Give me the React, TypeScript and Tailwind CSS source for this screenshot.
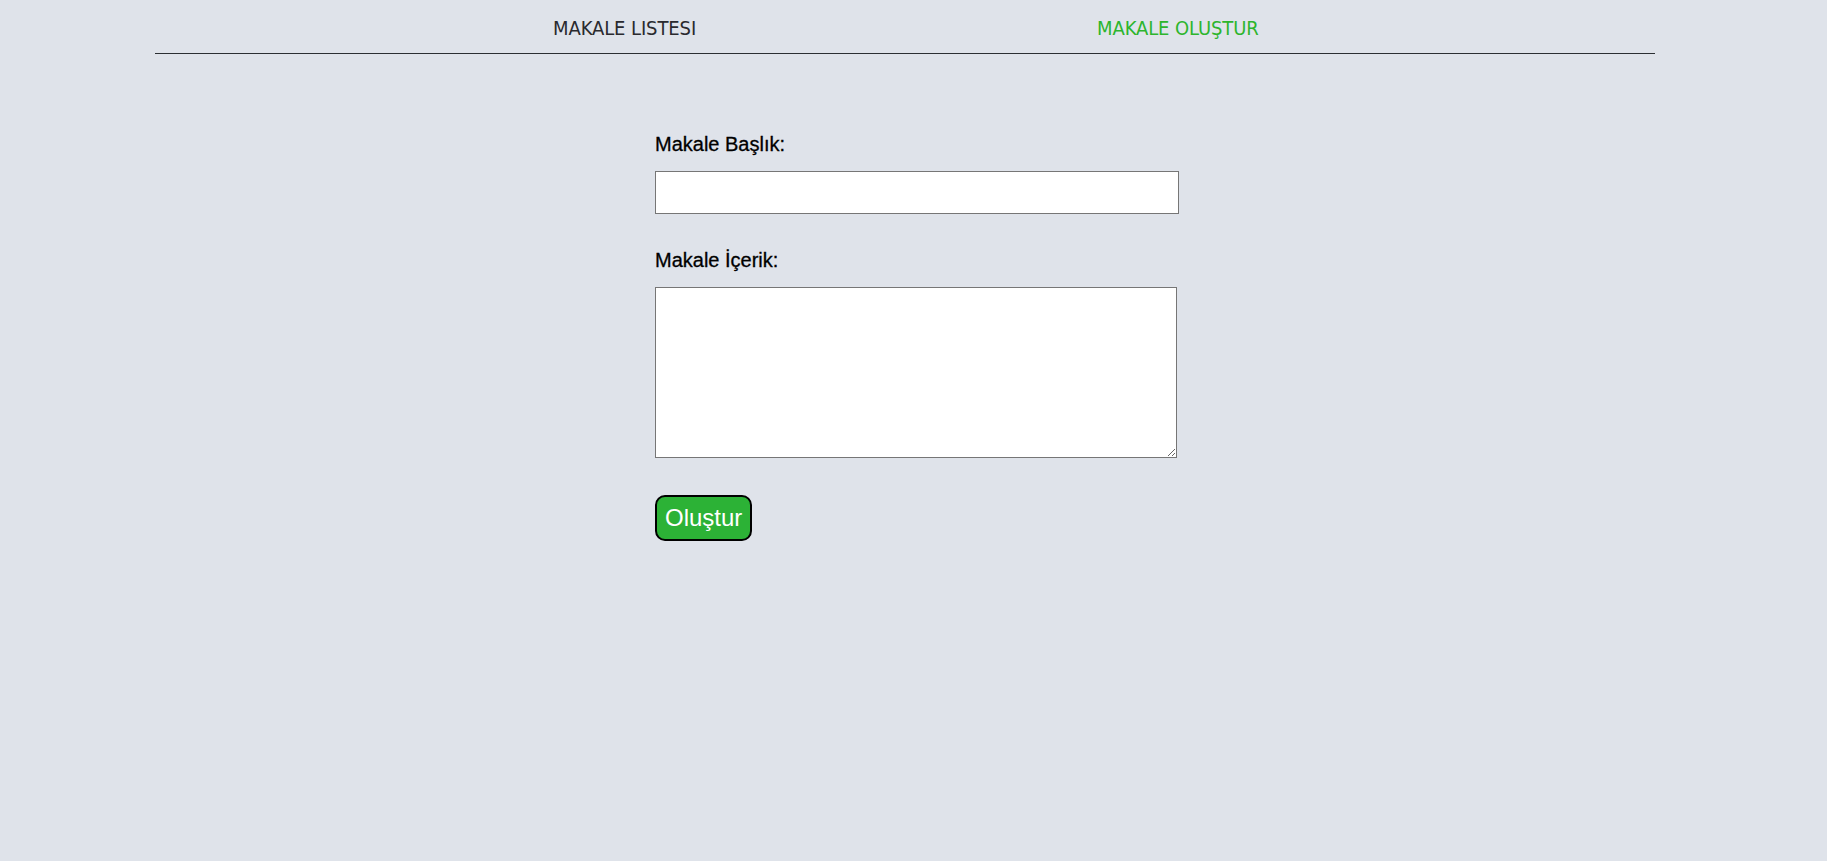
import React from 'react';

const App: React.FC = () => {
  return (
    <div className="min-h-[861px] w-full bg-[#dfe3ea]">
      <nav className="ml-[155px] flex h-[54px] w-[1500px] items-center border-b-[1.5px] border-[#2b2f33] pt-[2px]">
        <a
          href="#"
          className="ml-[398px] w-[544px] text-[20px] leading-none tracking-[-0.1px] text-[#2a2a2e]"
          style={{ fontFamily: '"Liberation Sans Narrow", "DejaVu Sans Condensed", sans-serif' }}
        >
          MAKALE LISTESI
        </a>
        <a
          href="#"
          className="text-[20px] leading-none tracking-[-0.1px] text-[#2db52d]"
          style={{ fontFamily: '"Liberation Sans Narrow", "DejaVu Sans Condensed", sans-serif' }}
        >
          MAKALE OLUŞTUR
        </a>
      </nav>

      <form
        className="ml-[655px] flex w-[524px] flex-col pt-[79px] font-['Liberation_Sans',Arial,sans-serif]"
        onSubmit={(e) => e.preventDefault()}
      >
        <label htmlFor="title" className="text-[20px] leading-[23px] text-black [-webkit-text-stroke:0.3px_black]">
          Makale Başlık:
        </label>
        <input
          id="title"
          type="text"
          className="mt-[15px] h-[43px] w-[524px] border border-[#767676] bg-white px-2 text-base outline-none"
        />

        <label htmlFor="content" className="mt-[35px] text-[20px] leading-[23px] text-black [-webkit-text-stroke:0.3px_black]">
          Makale İçerik:
        </label>
        <textarea
          id="content"
          className="mt-[15px] h-[171px] w-[522px] border border-[#767676] bg-white p-1 text-base outline-none"
        />

        <div className="mt-[37px]">
          <button
            type="submit"
            className="h-[46px] rounded-[10px] border-2 border-black bg-[#2cb236] px-[8px] text-[24px] leading-none text-white"
          >
            Oluştur
          </button>
        </div>
      </form>
    </div>
  );
};

export default App;
